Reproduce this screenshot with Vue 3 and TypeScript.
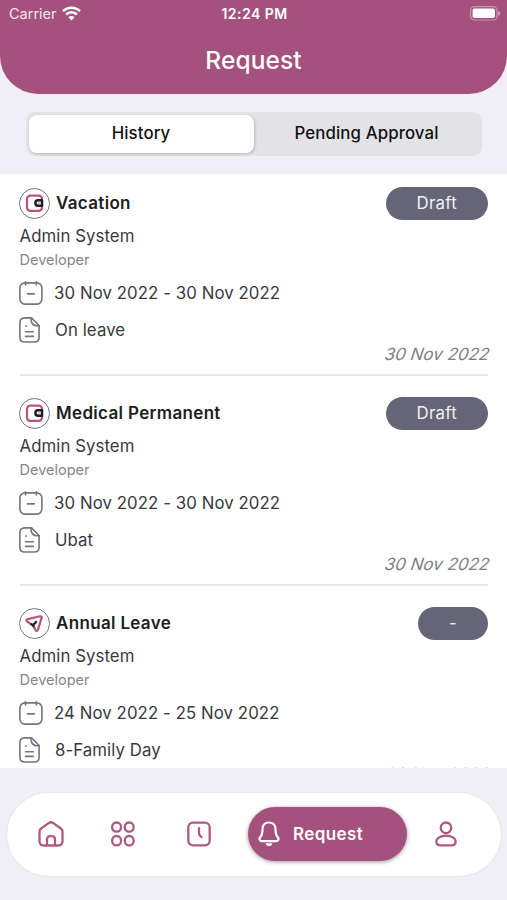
<script setup lang="ts">
interface LeaveRequest {
  title: string
  icon: 'wallet' | 'plane'
  person: string
  role: string
  period: string
  reason: string
  status: string
  created: string
}

const requests: LeaveRequest[] = [
  { title: 'Vacation', icon: 'wallet', person: 'Admin System', role: 'Developer', period: '30 Nov 2022 - 30 Nov 2022', reason: 'On leave', status: 'Draft', created: '30 Nov 2022' },
  { title: 'Medical Permanent', icon: 'wallet', person: 'Admin System', role: 'Developer', period: '30 Nov 2022 - 30 Nov 2022', reason: 'Ubat', status: 'Draft', created: '30 Nov 2022' },
  { title: 'Annual Leave', icon: 'plane', person: 'Admin System', role: 'Developer', period: '24 Nov 2022 - 25 Nov 2022', reason: '8-Family Day', status: '-', created: '30 Nov 2022' },
]
</script>

<template>
  <div class="screen">
    <header class="header">
      <div class="status-bar">
        <div class="carrier">
          <span>Carrier</span>
          <svg width="19" height="15" viewBox="0 0 19 15" fill="none" stroke="#fff" stroke-width="2.5">
            <path d="M1 5.2a12 12 0 0 1 17 0" />
            <path d="M4.1 8.5a7.6 7.6 0 0 1 10.8 0" />
            <path d="M9.5 14.5 6.4 11.2a4.4 4.4 0 0 1 6.2 0Z" fill="#fff" stroke="none" />
          </svg>
        </div>
        <span class="time">12:24 PM</span>
        <svg class="battery" width="31" height="15" viewBox="0 0 31 15">
          <rect x="0.6" y="0.6" width="26.4" height="13.4" rx="3.6" fill="none" stroke="#fff" stroke-opacity="0.4" stroke-width="1.2" />
          <rect x="2.6" y="2.6" width="22.4" height="9.4" rx="1.8" fill="#fff" />
          <path d="M28.2 5v4.8c1.2-.5 2-1.3 2-2.4s-.8-1.9-2-2.4Z" fill="#fff" fill-opacity="0.5" />
        </svg>
      </div>
      <h1 class="title">Request</h1>
    </header>

    <div class="filter">
      <div class="segments">
        <button class="segment active">History</button>
        <button class="segment">Pending Approval</button>
      </div>
    </div>

    <main class="list">
      <article v-for="item in requests" :key="item.title" class="card">
        <div class="card-head">
          <span class="badge-icon">
            <svg v-if="item.icon === 'wallet'" width="19" height="19" viewBox="0 0 19 19" fill="none">
              <rect x="2" y="1.6" width="15" height="15.2" rx="3.2" stroke="#b9547f" stroke-width="2.2" />
              <path d="M17 6.3h-3.900a2.700 2.700 0 0 0 0 5.400H17Z" fill="#fff" stroke="#211c24" stroke-width="2.5" stroke-linejoin="round" />
              <path d="M13 9h2" stroke="#8a858e" stroke-width="1" />
            </svg>
            <svg v-else width="19" height="19" viewBox="0 0 19 19" fill="none" stroke-linejoin="round" stroke-linecap="round">
              <path d="M2.800 5.100 15 2.300c1.100-.2 1.900.6 1.600 1.600l-3.700 12c-.4 1.200-1.700 1.300-2.300.3L7.900 11.300 2.100 7.500C1 6.800 1.400 5.400 2.800 5.100Z" stroke="#b9547f" stroke-width="2.2" />
              <path d="m6.200 10.200 1.900.9 3-3.200M8.100 11.100l.6 1.100" stroke="#211c24" stroke-width="2.200" />
            </svg>
          </span>
          <h2 class="card-title">{{ item.title }}</h2>
          <span class="status">{{ item.status }}</span>
        </div>
        <p class="person">{{ item.person }}</p>
        <p class="role">{{ item.role }}</p>
        <div class="row period-row">
          <svg width="24" height="24" viewBox="0 0 24 24" fill="none" stroke="#757583" stroke-width="1.6" stroke-linecap="round">
            <rect x="0.9" y="1.9" width="22" height="21.2" rx="5" />
            <path d="M6.500.9v3M17.300.9v3M8.500 12.900h6.800" />
          </svg>
          <span class="period">{{ item.period }}</span>
        </div>
        <div class="row reason-row">
          <svg width="24" height="26" viewBox="0 0 24 26" fill="none" stroke="#757583" stroke-width="1.6" stroke-linecap="round" stroke-linejoin="round">
            <path d="M12.500.9H5.700C2.500.9.9 2.700.9 5.700v14.500c0 3.200 1.700 4.800 4.800 4.800h9.600c3.200 0 4.800-1.700 4.800-4.800V8.500Z" />
            <path d="M12.500.9c-.8 1.400-.5 3.300.5 5.100 1.400 2.200 4.300 3.200 7.100 2.500" />
            <path d="M6.800 9.100h.5M6.500 14.700h7.900M6.500 19.400h7.900" />
          </svg>
          <span class="reason">{{ item.reason }}</span>
        </div>
        <time class="created">{{ item.created }}</time>
      </article>
    </main>

    <footer class="footer">
      <nav class="nav">
        <button class="nav-item home" aria-label="Home">
          <svg width="26" height="26" viewBox="0 0 26 26" fill="none" stroke="#ad5a83" stroke-width="2.300" stroke-linejoin="round">
            <path d="M1.500 10.700c0-1.400.5-2.300 1.600-3.200l7.500-5.400c1.600-1.100 3.200-1.100 4.800 0l7.500 5.400c1.100.9 1.600 1.800 1.600 3.200v9.300c0 3-1.500 4.500-4.500 4.500H6c-3 0-4.500-1.500-4.500-4.500Z" />
            <path d="M9 24.500v-6c0-2.100 1.200-3.300 3.200-3.300h1.600c2 0 3.200 1.200 3.200 3.300v6" />
          </svg>
        </button>
        <button class="nav-item apps" aria-label="Apps">
          <svg width="24" height="26" viewBox="0 0 24 26" fill="none" stroke="#ad5a83" stroke-width="2.300">
            <rect x="1.200" y="1.500" width="8.800" height="9.200" rx="4.200" />
            <rect x="13.800" y="1.500" width="8.800" height="9.200" rx="4.200" />
            <rect x="1.200" y="15" width="8.800" height="9.400" rx="4.200" />
            <rect x="13.800" y="15" width="8.800" height="9.400" rx="4.200" />
          </svg>
        </button>
        <button class="nav-item clock" aria-label="Attendance">
          <svg width="24" height="26" viewBox="0 0 24 26" fill="none" stroke="#ad5a83" stroke-width="2.300" stroke-linecap="round" stroke-linejoin="round">
            <rect x="1.300" y="1.600" width="21.400" height="22.800" rx="4.800" />
            <path d="M12 7.200v5c0 1.600.8 2.700 2.500 3.900" />
          </svg>
        </button>
        <button class="nav-item current">
          <svg width="22" height="26" viewBox="0 0 22 26" fill="none" stroke="#fff" stroke-width="2.200" stroke-linecap="round" stroke-linejoin="round">
            <path d="M11 1.500c-4 0-6.500 2.700-6.500 6.700 0 5-1 6.600-2.300 8-1.600 1.900-.4 3.900 1.700 3.900h14.200c2.100 0 3.300-2 1.700-3.900-1.300-1.400-2.300-3-2.300-8 0-4-2.500-6.700-6.500-6.700Z" />
            <path d="M8.500 23c1 1.700 4 1.700 5 0Z" fill="#fff" stroke-width="1.500" />
          </svg>
          <span>Request</span>
        </button>
        <button class="nav-item profile" aria-label="Profile">
          <svg width="22" height="26" viewBox="0 0 22 26" fill="none" stroke="#ad5a83" stroke-width="2.300">
            <circle cx="11" cy="6.800" r="5.300" />
            <path d="M11 14.700c5.600 0 9.600 2.500 9.600 5.900 0 2.500-1.600 3.800-4.300 3.800H5.700c-2.700 0-4.300-1.300-4.300-3.800 0-3.400 4-5.900 9.600-5.900Z" />
          </svg>
        </button>
      </nav>
    </footer>
  </div>
</template>

<style>
body {
  margin: 0;
  background: #f0eff5;
}
</style>

<style scoped>
.screen {
  width: 507px;
  height: 900px;
  display: flex;
  flex-direction: column;
  overflow: hidden;
  background: #f0eff5;
  font-family: Inter, "Liberation Sans", sans-serif;
  color: #39393d;
}
h1, h2, p {
  margin: 0;
}
button {
  border: 0;
  padding: 0;
  background: none;
  font: inherit;
  color: inherit;
}
svg {
  display: block;
  flex: none;
}
.header {
  height: 94px;
  flex: none;
  box-sizing: border-box;
  background: #a5517d;
  border-radius: 0 0 38px 38px;
  color: #fff;
}
.status-bar {
  height: 27px;
  padding: 0 6px 0 9px;
  display: grid;
  grid-template-columns: 1fr auto 1fr;
  align-items: center;
}
.carrier {
  display: flex;
  align-items: center;
  gap: 5px;
  font-size: 14.5px;
  color: #f6e6ef;
}
.time {
  font-size: 14px;
  font-weight: 600;
  letter-spacing: 0.45px;
  margin-right: 1px;
}
.battery {
  justify-self: end;
}
.title {
  margin-top: 17px;
  font-size: 24.5px;
  line-height: 32px;
  font-weight: 500;
  letter-spacing: 0.1px;
  text-align: center;
}
.filter {
  height: 80px;
  flex: none;
  box-sizing: border-box;
  padding: 18px 25px 0 26px;
}
.segments {
  height: 44px;
  box-sizing: border-box;
  padding: 3px;
  display: grid;
  grid-template-columns: 225px 1fr;
  border-radius: 9px;
  background: #e3e2e6;
}
.segment {
  padding-bottom: 3px;
  border-radius: 8px;
  font-size: 16.8px;
  font-weight: 500;
  letter-spacing: 0.12px;
  color: #111;
}
.segment.active {
  padding-right: 1px;
  background: #fff;
  box-shadow: 1px 1px 3px rgba(0, 0, 0, 0.2);
}
.list {
  height: 594px;
  flex: none;
  overflow: hidden;
  background: #fff;
}
.card {
  height: 210px;
  box-sizing: border-box;
  margin: 0 19px 0 20px;
  padding-top: 20px;
  border-bottom: 2px solid #e9e9ea;
  display: flex;
  flex-direction: column;
}
.card:first-child {
  height: 202px;
  padding-top: 12px;
}
.card-head {
  height: 34px;
  display: flex;
  align-items: center;
}
.badge-icon {
  width: 31px;
  height: 31px;
  box-sizing: border-box;
  margin-left: -1px;
  display: flex;
  align-items: center;
  justify-content: center;
  border: 1.5px solid #77777f;
  border-radius: 50%;
}
.card-title {
  margin: 0 0 1px 6px;
  font-size: 17px;
  font-weight: 600;
  letter-spacing: 0.33px;
  color: #1d1d20;
}
.status {
  min-width: 70px;
  height: 33px;
  box-sizing: border-box;
  margin-left: auto;
  padding: 0 31px;
  border-radius: 17px;
  background: #666577;
  color: #f2f2f5;
  font-size: 16.8px;
  line-height: 32px;
  letter-spacing: 0.3px;
  text-align: center;
}
.person {
  margin: 5px 0 0 -0.5px;
  font-size: 16.8px;
  line-height: 22px;
  letter-spacing: 0.07px;
}
.role {
  margin: 3px 0 0 -0.5px;
  font-size: 14.5px;
  line-height: 20px;
  letter-spacing: 0;
  color: #85858d;
}
.row {
  margin-left: -1px;
  display: flex;
  align-items: center;
  font-size: 16.8px;
  letter-spacing: 0.08px;
}
.period-row {
  height: 26px;
  margin-top: 10px;
  gap: 11px;
}
.reason-row {
  height: 26px;
  margin-top: 11px;
  gap: 12px;
}
.created {
  margin: 1px -2px 0 0;
  align-self: flex-end;
  font-size: 16.8px;
  line-height: 20px;
  font-style: italic;
  letter-spacing: 0.1px;
  transform: skewX(-9deg);
  color: #7d7d86;
}
.footer {
  height: 132px;
  flex: none;
  box-sizing: border-box;
  padding: 25px 6px 0 7px;
}
.nav {
  height: 83px;
  box-sizing: border-box;
  padding-bottom: 2px;
  display: flex;
  align-items: center;
  border-radius: 42px;
  background: #fff;
  box-shadow: 0 0 2px rgba(0, 0, 0, 0.12);
}
.home {
  margin-left: 31px;
}
.apps {
  margin-left: 47px;
}
.clock {
  margin-left: 52px;
}
.current {
  width: 159px;
  height: 54px;
  box-sizing: border-box;
  margin-left: 37px;
  padding-left: 10px;
  display: flex;
  align-items: center;
  gap: 13px;
  border-radius: 27px;
  background: #a5517d;
  box-shadow: 0 1px 4px rgba(0, 0, 0, 0.4);
  color: #fff;
  font-size: 17px;
  font-weight: 600;
  letter-spacing: 0.4px;
}
.profile {
  margin-left: 28px;
}
</style>
